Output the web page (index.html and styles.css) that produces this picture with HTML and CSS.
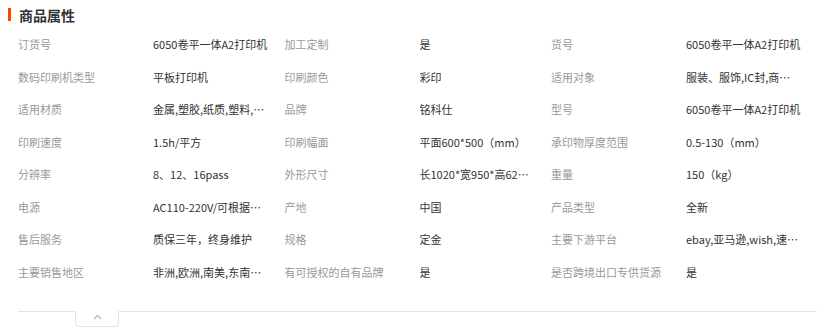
FILE: index.html
```html
<!DOCTYPE html>
<html lang="zh">
<head>
<meta charset="utf-8">
<link rel="stylesheet" href="styles.css">
</head>
<body>
<div class="panel">
  <div class="title"><span class="bar"></span><span class="title-text">商品属性</span></div>
  <div class="attrs">
    <div class="k">订货号</div><div class="v">6050卷平一体A2打印机</div>
    <div class="k">加工定制</div><div class="v">是</div>
    <div class="k">货号</div><div class="v">6050卷平一体A2打印机</div>

    <div class="k">数码印刷机类型</div><div class="v">平板打印机</div>
    <div class="k">印刷颜色</div><div class="v">彩印</div>
    <div class="k">适用对象</div><div class="v">服装、服饰,IC封,商标贴纸,皮革</div>

    <div class="k">适用材质</div><div class="v">金属,塑胶,纸质,塑料,皮革</div>
    <div class="k">品牌</div><div class="v">铭科仕</div>
    <div class="k">型号</div><div class="v">6050卷平一体A2打印机</div>

    <div class="k">印刷速度</div><div class="v">1.5h/平方</div>
    <div class="k">印刷幅面</div><div class="v">平面600*500（mm）</div>
    <div class="k">承印物厚度范围</div><div class="v">0.5-130（mm）</div>

    <div class="k">分辨率</div><div class="v">8、12、16pass</div>
    <div class="k">外形尺寸</div><div class="v">长1020*宽950*高620（mm）</div>
    <div class="k">重量</div><div class="v">150（kg）</div>

    <div class="k">电源</div><div class="v">AC110-220V/可根据需求定制</div>
    <div class="k">产地</div><div class="v">中国</div>
    <div class="k">产品类型</div><div class="v">全新</div>

    <div class="k">售后服务</div><div class="v">质保三年，终身维护</div>
    <div class="k">规格</div><div class="v">定金</div>
    <div class="k">主要下游平台</div><div class="v">ebay,亚马逊,wish,速卖通</div>

    <div class="k">主要销售地区</div><div class="v">非洲,欧洲,南美,东南亚,北美,中东</div>
    <div class="k">有可授权的自有品牌</div><div class="v">是</div>
    <div class="k">是否跨境出口专供货源</div><div class="v">是</div>
  </div>
  <div class="foot">
    <div class="fold">
      <svg width="9" height="6" viewBox="0 0 9 6"><path d="M1 5 L4.5 1.5 L8 5" fill="none" stroke="#a9b4c4" stroke-width="1.2"/></svg>
    </div>
  </div>
</div>
</body>
</html>
```
FILE: styles.css
```css
html, body {
  margin: 0;
  padding: 0;
  background: #fff;
}
body {
  font-family: "Noto Sans CJK SC", "Noto Sans", sans-serif;
  font-size: 11px;
  color: #333;
  width: 837px;
  height: 331px;
  overflow: hidden;
}
.panel {
  padding: 0 20px 0 8px;
}
.title {
  display: flex;
  align-items: center;
  height: 27px;
  padding-top: 1px;
}
.bar {
  width: 3px;
  height: 13px;
  background: #ff4400;
  margin-right: 8px;
}
.title-text {
  font-size: 14px;
  font-weight: bold;
  color: #333;
  line-height: 16px;
}
.attrs {
  margin-left: 10px;
  display: grid;
  grid-template-columns: 135px 131.5px 135px 131.5px 135px 131.5px;
  grid-auto-rows: 32.57px;
}
.k, .v {
  line-height: 32.57px;
  white-space: nowrap;
  overflow: hidden;
  text-overflow: ellipsis;
}
.k {
  color: #999;
  padding-right: 8px;
}
.v {
  color: #333;
  max-width: 115px;
}
.foot {
  margin: 22px 0 0 10px;
  border-top: 1px solid #e5e5e5;
  height: 24px;
}
.fold {
  margin-left: 57px;
  margin-top: -1px;
  width: 44px;
  height: 16px;
  border: 1px solid #e5e5e5;
  border-top: 1px solid #fff;
  border-radius: 0 0 4px 4px;
  display: flex;
  justify-content: center;
  padding-top: 2px;
  box-sizing: border-box;
}
.fold svg {
  display: block;
}
```
